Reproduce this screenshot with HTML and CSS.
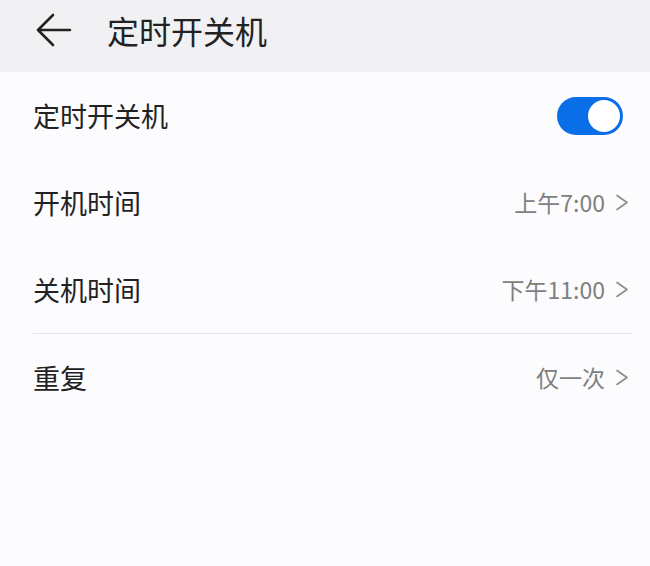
FILE: index.html
```html
<!DOCTYPE html>
<html lang="zh-CN">
<head>
<meta charset="utf-8">
<title>定时开关机</title>
<link rel="stylesheet" href="styles.css">
</head>
<body>
<div class="page">
  <header class="topbar">
    <svg class="back" width="36" height="34" viewBox="0 0 36 34" aria-hidden="true">
      <path d="M2 17 H34 M17 2 L2 17 L17 32" fill="none" stroke="#222" stroke-width="2.6" stroke-linecap="round" stroke-linejoin="round"/>
    </svg>
    <h1 class="title">定时开关机</h1>
  </header>
  <main class="list">
    <div class="row">
      <span class="label">定时开关机</span>
      <span class="switch on"><span class="knob"></span></span>
    </div>
    <div class="row">
      <span class="label">开机时间</span>
      <span class="value">上午7:00</span>
      <svg class="chev" width="14" height="17" viewBox="0 0 14 17" aria-hidden="true"><path d="M2 1.5 L12 8.5 L2 15.5" fill="none" stroke="#8c8c8c" stroke-width="1.6" stroke-linecap="round" stroke-linejoin="round"/></svg>
    </div>
    <div class="row divided">
      <span class="label">关机时间</span>
      <span class="value">下午11:00</span>
      <svg class="chev" width="14" height="17" viewBox="0 0 14 17" aria-hidden="true"><path d="M2 1.5 L12 8.5 L2 15.5" fill="none" stroke="#8c8c8c" stroke-width="1.6" stroke-linecap="round" stroke-linejoin="round"/></svg>
    </div>
    <div class="row">
      <span class="label">重复</span>
      <span class="value">仅一次</span>
      <svg class="chev" width="14" height="17" viewBox="0 0 14 17" aria-hidden="true"><path d="M2 1.5 L12 8.5 L2 15.5" fill="none" stroke="#8c8c8c" stroke-width="1.6" stroke-linecap="round" stroke-linejoin="round"/></svg>
    </div>
  </main>
</div>
</body>
</html>
```
FILE: styles.css
```css
* { box-sizing: border-box; }
html, body {
  margin: 0;
  padding: 0;
  background: #fcfbfd;
  font-family: "Noto Sans CJK SC", "Noto Sans", sans-serif;
}
.page {
  width: 650px;
  height: 566px;
  background: #fcfbfd;
  overflow: hidden;
}
.topbar {
  height: 72px;
  background: #f1f1f3;
  display: flex;
  align-items: center;
  padding-left: 36px;
}
.back {
  display: block;
  margin-top: -13px;
}
.title {
  margin: 0 0 0 35px;
  font-size: 32px;
  font-weight: 400;
  color: #222;
  line-height: 1;
  margin-top: -12px;
}
.list {
  padding: 0 17px 0 33px;
}
.row {
  height: 87px;
  display: flex;
  align-items: center;
}
.row.divided {
  border-bottom: 1px solid #e4e4e6;
  height: 88px;
}
.label {
  flex: 1;
  font-size: 27px;
  color: #222;
  line-height: 1;
}
.value {
  font-size: 23px;
  color: #808080;
  line-height: 1;
  margin-right: 10px;
}
.chev {
  display: block;
  margin-right: 4px;
}
.switch {
  width: 66px;
  height: 38px;
  border-radius: 19px;
  background: #0a6fe6;
  position: relative;
  margin-right: 10px;
}
.switch .knob {
  position: absolute;
  top: 3px;
  right: 3px;
  width: 32px;
  height: 32px;
  border-radius: 50%;
  background: #fff;
}
```
